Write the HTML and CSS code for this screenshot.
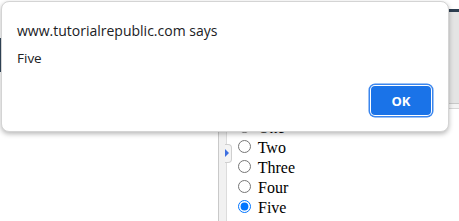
FILE: index.html
```html
<!DOCTYPE html>
<html>
<head>
<meta charset="utf-8">
<link rel="stylesheet" href="styles.css">
</head>
<body>
<div class="page">
  <div class="top">
    <div class="top-left"><div class="dark-block"></div></div>
    <div class="top-right">
      <div class="dark-bar"></div>
      <div class="toolbar"></div>
      <div class="toolbar-edge"></div>
    </div>
  </div>
  <div class="bottom">
    <div class="left-pane"></div>
    <div class="sep"><div class="toggle"><span class="tri"></span></div></div>
    <div class="right-pane">
      <label class="row"><input type="radio" name="n"> One</label>
      <label class="row"><input type="radio" name="n"> Two</label>
      <label class="row"><input type="radio" name="n"> Three</label>
      <label class="row"><input type="radio" name="n"> Four</label>
      <label class="row"><input type="radio" name="n" checked> Five</label>
    </div>
  </div>

  <div class="dialog">
    <div class="title">www.tutorialrepublic.com says</div>
    <div class="msg">Five</div>
    <div class="footer"><button class="ok">OK</button></div>
  </div>
</div>
</body>
</html>
```
FILE: styles.css
```css
html, body { margin: 0; padding: 0; background: #fff; }
.page { position: relative; width: 459px; height: 221px; overflow: hidden; background: #fff; }
.top { display: flex; height: 109px; }
.top-left { width: 220px; }
.dark-block { margin-top: 38px; width: 4px; height: 34px; background: #34495e; }
.top-right { flex: 1; display: flex; flex-direction: column; }
.dark-bar { margin-top: 9px; height: 3px; background: #2c3e50; }
.toolbar { height: 91px; background: #e4e4e4; border-bottom: 1px solid #c8c8c8; }
.toolbar-edge { height: 4px; background: #f3f3f3; border-bottom: 1px solid #d6d6d6; }
.bottom { display: flex; height: 112px; }
.left-pane { width: 218px; }
.sep { position: relative; width: 7px; background: #f1f1f1; border-left: 1px solid #c9c9c9; border-right: 1px solid #dcdcdc; }
.toggle { position: absolute; left: 6px; top: 35px; width: 6px; height: 17px; background: #f4f4f4; border: 1px solid #cfcfcf; border-left: none; border-radius: 0 4px 4px 0; }
.tri { position: absolute; left: 0; top: 4px; width: 0; height: 0; border-top: 4px solid transparent; border-bottom: 4px solid transparent; border-left: 4px solid #3d6fe0; }
.right-pane { padding-left: 6px; padding-top: 8px; font-family: "Liberation Serif", serif; font-size: 16px; color: #000; }
.row { display: block; height: 20px; line-height: 20px; }
.row input { margin: 3px 3px 0 5px; }
.dialog { position: absolute; left: 1px; top: 1px; width: 446px; height: 129px; background: #fff; border: 1px solid #d4d4d4; border-radius: 8px; box-shadow: 0 2px 5px rgba(0,0,0,0.28); display: flex; flex-direction: column; font-family: "Open Sans", "Liberation Sans", sans-serif; color: #202124; }
.title { margin: 18px 0 0 15px; font-size: 14px; line-height: 22px; }
.msg { margin: 7px 0 0 15px; font-size: 13.5px; line-height: 18px; }
.footer { margin-top: auto; display: flex; justify-content: flex-end; padding: 0 17px 16px 0; }
.ok { width: 60px; height: 29px; background: #1a73e8; color: #fff; border: none; border-radius: 4px; font-family: "Open Sans", "Liberation Sans", sans-serif; font-weight: 700; font-size: 13px; padding: 0; box-shadow: 0 0 0 1px #fff, 0 0 0 2.5px #3b86ee; }
```
